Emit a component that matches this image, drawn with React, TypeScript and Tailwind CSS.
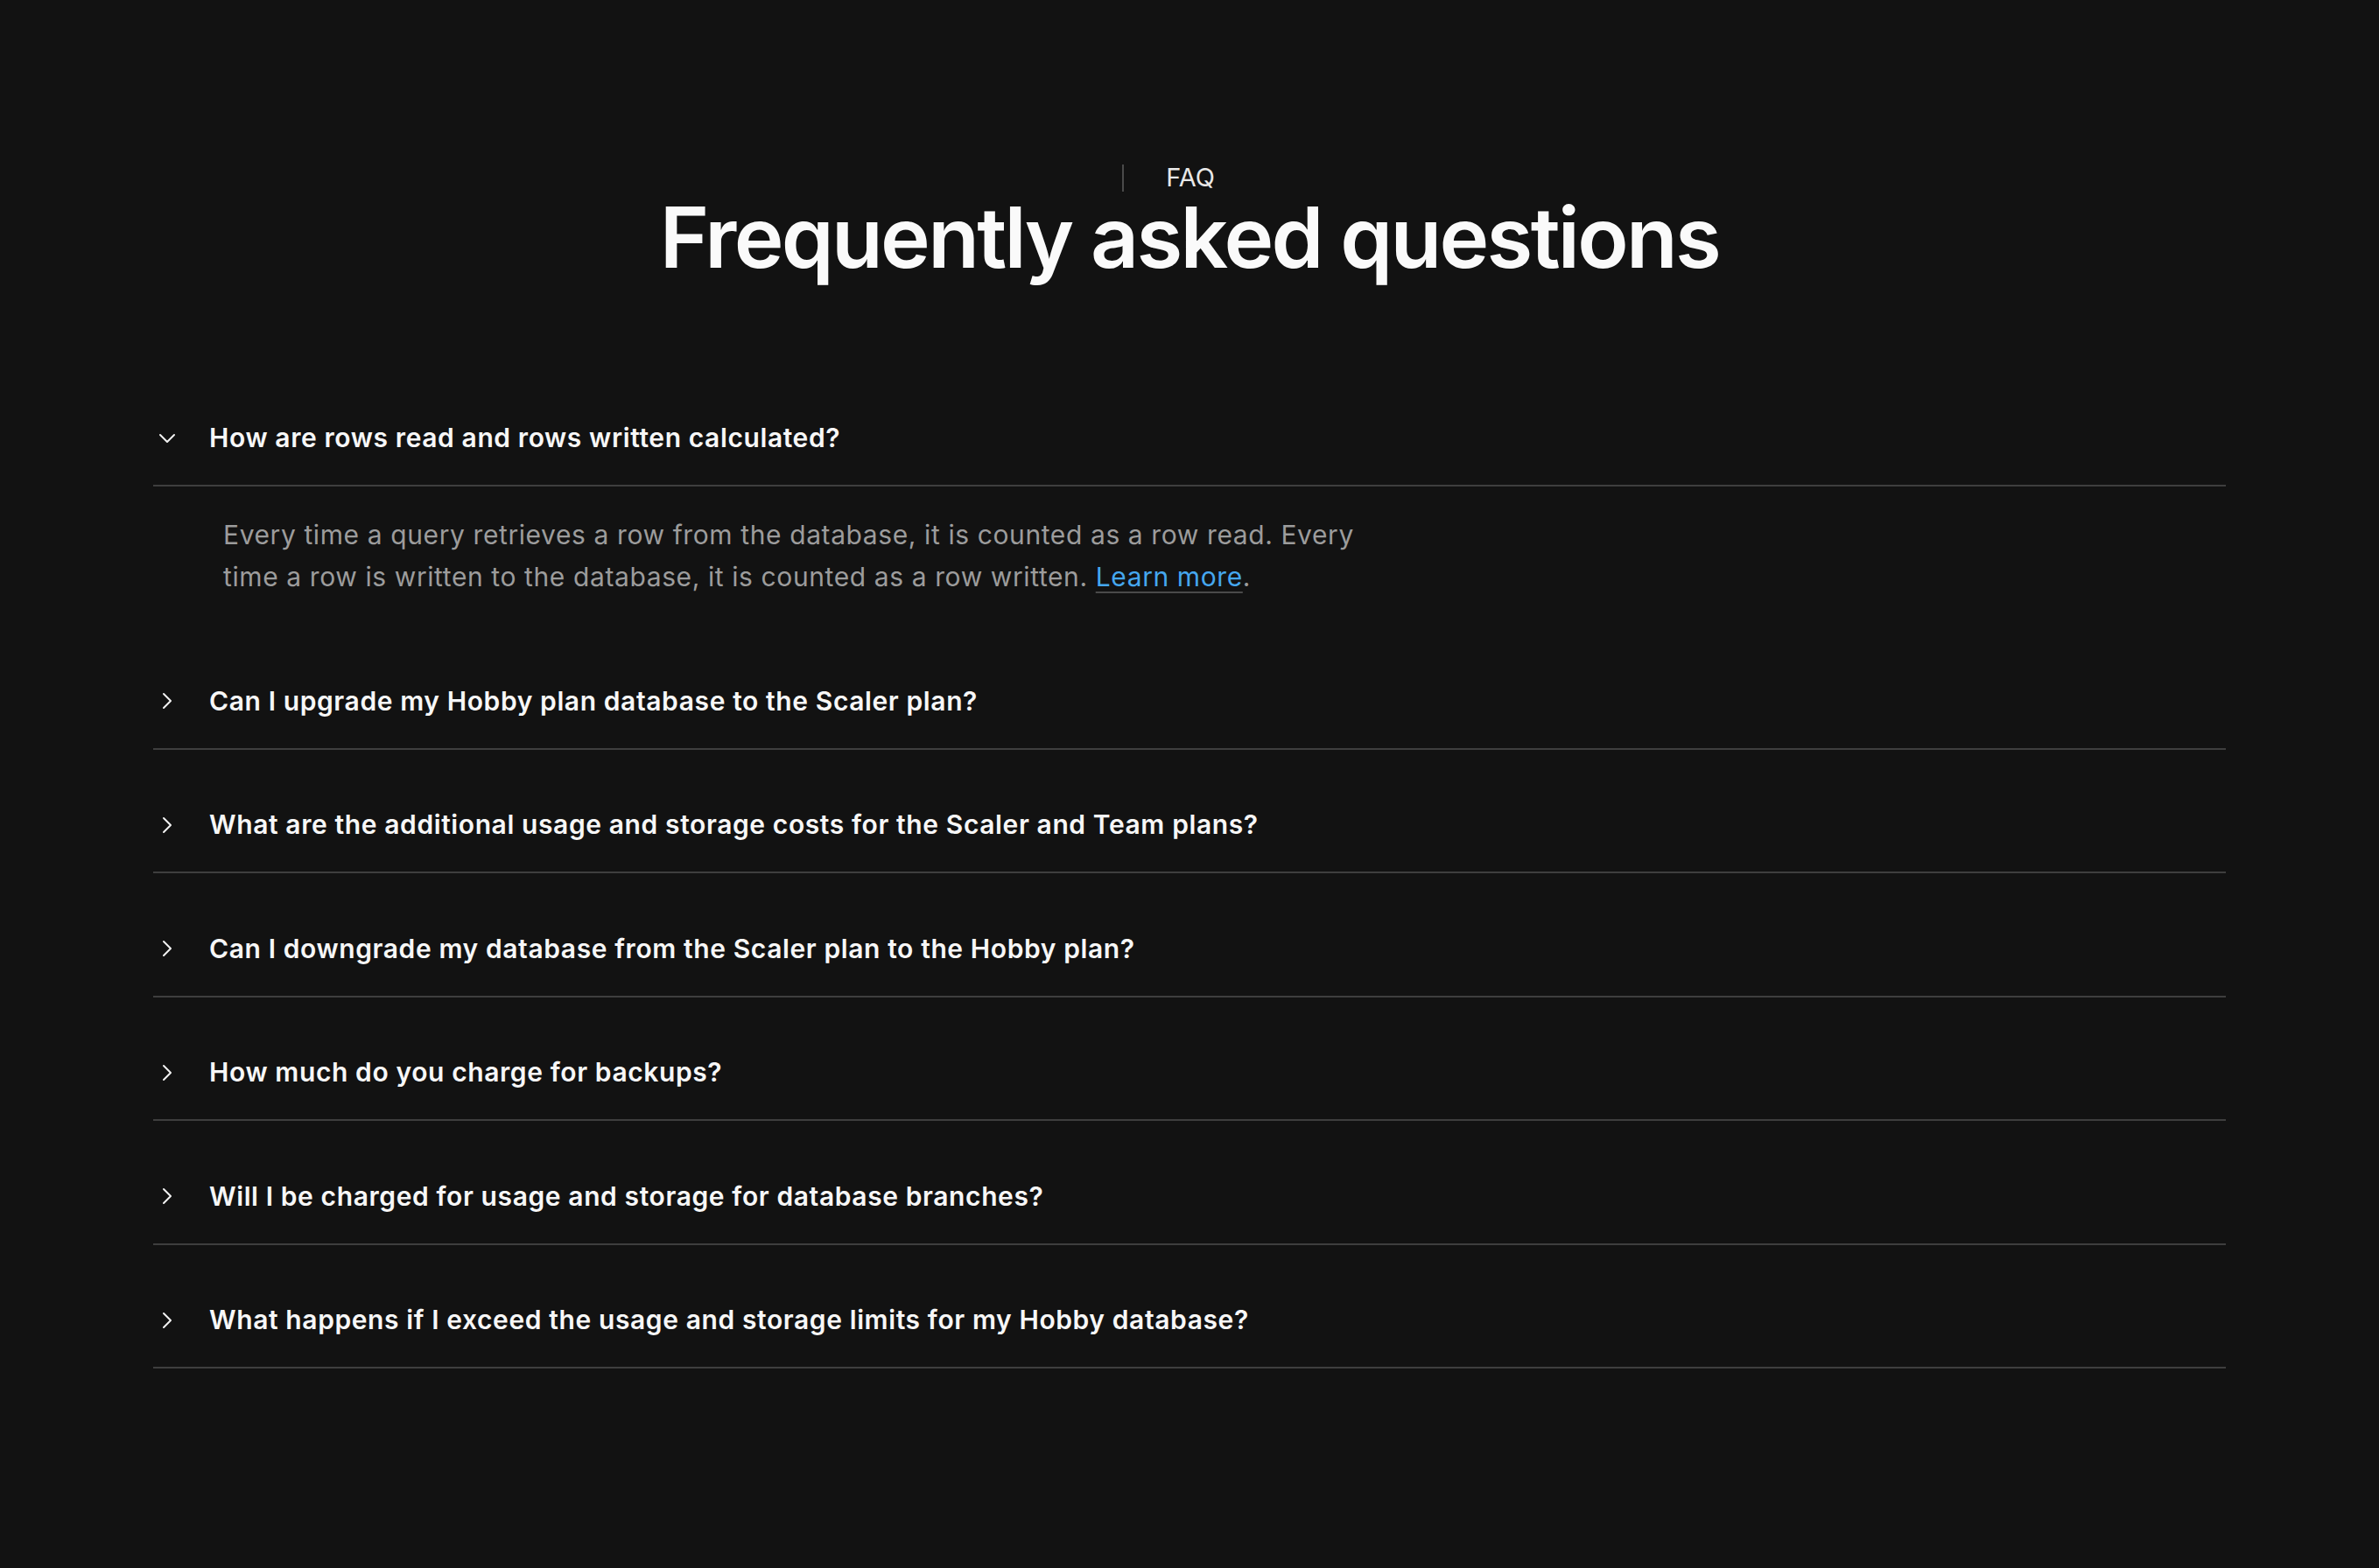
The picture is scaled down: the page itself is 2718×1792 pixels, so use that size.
import React from "react";
import { ChevronRight, ChevronDown } from "lucide-react";

const questions = [
  "Can I upgrade my Hobby plan database to the Scaler plan?",
  "What are the additional usage and storage costs for the Scaler and Team plans?",
  "Can I downgrade my database from the Scaler plan to the Hobby plan?",
  "How much do you charge for backups?",
  "Will I be charged for usage and storage for database branches?",
  "What happens if I exceed the usage and storage limits for my Hobby database?",
];

export default function App() {
  return (
    <div
      className="min-h-screen w-full bg-[#121212] pt-[183px] pb-[200px]"
      style={{ fontFamily: "Inter, 'Noto Sans', sans-serif" }}
    >
      <div className="mx-auto w-[2368px]">
        <div className="flex flex-col items-center">
          <div className="flex items-center h-[40px]">
            <div className="border-l-2 border-[#4a4a4a] h-[31px] pl-[48px] pr-[48px] flex items-center text-[29px] leading-[40px] text-[#e8e8e8]">
              FAQ
            </div>
          </div>
          <h1 className="text-[96px] leading-[96px] font-semibold tracking-[-0.028em] text-[#fafafa]">
            Frequently asked questions
          </h1>
        </div>

        <div className="mt-[128px]">
          <div className="mt-[32px]">
            <div className="flex items-center gap-[32px] py-[31px] border-b-2 border-[#3e3e3e]">
              <ChevronDown size={32} strokeWidth={1.5} className="text-[#f2f2f2] shrink-0" />
              <span className="text-[30px] leading-[45px] font-semibold tracking-[0.02em] text-[#f7f7f7]">
                How are rows read and rows written calculated?
              </span>
            </div>
            <div className="pl-[80px] pt-[31px] pb-[32px]">
              <p className="w-[1330px] text-[30px] leading-[48px] tracking-[0.02em] text-[#9c9c9c]">
                Every time a query retrieves a row from the database, it is counted as a row read. Every time a
                row is written to the database, it is counted as a row written.{" "}
                <a className="text-[#45a7ef] underline decoration-[#4a4a4a] decoration-2 underline-offset-[6px]">
                  Learn more
                </a>
                .
              </p>
            </div>
          </div>
          {questions.map((q) => (
            <div key={q} className="mt-[32.5px]">
              <div className="flex items-center gap-[32px] py-[31px] border-b-2 border-[#3e3e3e]">
                <ChevronRight size={32} strokeWidth={1.5} className="text-[#f2f2f2] shrink-0" />
                <span className="text-[30px] leading-[45px] font-semibold tracking-[0.02em] text-[#f7f7f7]">
                  {q}
                </span>
              </div>
            </div>
          ))}
        </div>
      </div>
    </div>
  );
}
